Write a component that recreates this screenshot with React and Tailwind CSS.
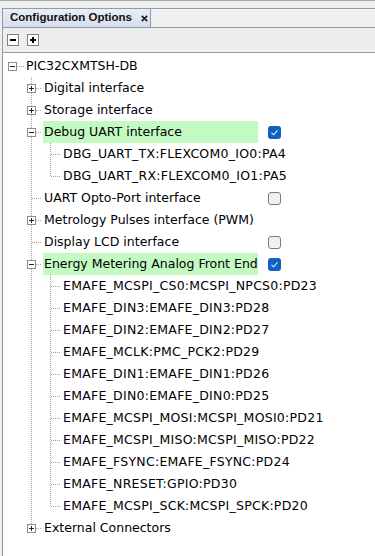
import React from "react";

const DOT = "#a3a3a3";
const BOX = "#8e8e8e";

function Expander({ cx, sign }) {
  const x = cx - 4;
  return (
    <g shapeRendering="crispEdges">
      <rect x={x + 0.5} y={7.5} width={8} height={8} fill="#fff" stroke={BOX} />
      <line x1={x + 2} x2={x + 7} y1={11.5} y2={11.5} stroke="#222" />
      {sign === "+" && <line x1={cx + 0.5} x2={cx + 0.5} y1={9} y2={14} stroke="#222" />}
    </g>
  );
}

function VLine({ x, y1, y2 }) {
  return (
    <line
      x1={x + 0.5}
      x2={x + 0.5}
      y1={y1}
      y2={y2}
      stroke={DOT}
      strokeDasharray="1 1"
      shapeRendering="crispEdges"
    />
  );
}

function HLine({ x1, x2, y = 11 }) {
  return (
    <line
      x1={x1}
      x2={x2}
      y1={y + 0.5}
      y2={y + 0.5}
      stroke={DOT}
      strokeDasharray="1 1"
      shapeRendering="crispEdges"
    />
  );
}

function Gutter({ row }) {
  const widths = { 0: 22, 1: 40, 2: 59 };
  const w = widths[row.lvl];
  return (
    <svg width={w} height={22} className="shrink-0 block">
      <g transform="translate(-3,0)">
        {row.lvl === 0 && (
          <>
            <HLine x1={17} x2={24} />
            <VLine x={31} y1={18} y2={22} />
            <Expander cx={12} sign="-" />
          </>
        )}
        {row.lvl === 1 && (
          <>
            <VLine x={31} y1={0} y2={row.last ? 12 : 22} />
            <HLine x1={32} x2={42} />
            {row.exp && <Expander cx={31} sign={row.exp} />}
          </>
        )}
        {row.lvl === 2 && (
          <>
            <VLine x={31} y1={0} y2={22} />
            <VLine x={50} y1={0} y2={row.last ? 12 : 22} />
            <HLine x1={51} x2={61} />
          </>
        )}
      </g>
    </svg>
  );
}

function CheckBox({ checked }) {
  if (checked) {
    return (
      <div className="w-[13px] h-[13px] rounded-[3px] bg-[#1062c2] flex items-center justify-center shrink-0">
        <svg width="9" height="9" viewBox="0 0 9 9">
          <path d="M1.5 4.8 L3.6 6.8 L7.5 2.3" fill="none" stroke="#e8f0fb" strokeWidth="1.1" />
        </svg>
      </div>
    );
  }
  return (
    <div className="w-[13px] h-[13px] rounded-[3px] bg-[#f1f1f1] border border-[#7b7b7b] shrink-0" />
  );
}

const rows = [
  { lvl: 0, text: "PIC32CXMTSH-DB", exp: "-" },
  { lvl: 1, text: "Digital interface", exp: "+" },
  { lvl: 1, text: "Storage interface", exp: "+" },
  { lvl: 1, text: "Debug UART interface", exp: "-", hl: true, cb: true },
  { lvl: 2, text: "DBG_UART_TX:FLEXCOM0_IO0:PA4" },
  { lvl: 2, text: "DBG_UART_RX:FLEXCOM0_IO1:PA5", last: true },
  { lvl: 1, text: "UART Opto-Port interface", cb: false },
  { lvl: 1, text: "Metrology Pulses interface (PWM)", exp: "+" },
  { lvl: 1, text: "Display LCD interface", cb: false },
  { lvl: 1, text: "Energy Metering Analog Front End", exp: "-", hl: true, cb: true },
  { lvl: 2, text: "EMAFE_MCSPI_CS0:MCSPI_NPCS0:PD23" },
  { lvl: 2, text: "EMAFE_DIN3:EMAFE_DIN3:PD28" },
  { lvl: 2, text: "EMAFE_DIN2:EMAFE_DIN2:PD27" },
  { lvl: 2, text: "EMAFE_MCLK:PMC_PCK2:PD29" },
  { lvl: 2, text: "EMAFE_DIN1:EMAFE_DIN1:PD26" },
  { lvl: 2, text: "EMAFE_DIN0:EMAFE_DIN0:PD25" },
  { lvl: 2, text: "EMAFE_MCSPI_MOSI:MCSPI_MOSI0:PD21" },
  { lvl: 2, text: "EMAFE_MCSPI_MISO:MCSPI_MISO:PD22" },
  { lvl: 2, text: "EMAFE_FSYNC:EMAFE_FSYNC:PD24" },
  { lvl: 2, text: "EMAFE_NRESET:GPIO:PD30" },
  { lvl: 2, text: "EMAFE_MCSPI_SCK:MCSPI_SPCK:PD20", last: true },
  { lvl: 1, text: "External Connectors", exp: "+", last: true },
];

function Row({ row }) {
  const hasCb = row.cb !== undefined;
  return (
    <div className="h-[22px] flex items-center">
      <Gutter row={row} />
      {hasCb || row.hl ? (
        <>
          <div
            className={
              "w-[215px] h-full flex items-center pl-px pt-px whitespace-nowrap " +
              (row.hl ? "bg-[#c2fac2]" : "")
            }
          >
            {row.text}
          </div>
          <div className="ml-[10px]">
            <CheckBox checked={row.cb} />
          </div>
        </>
      ) : (
        <div
          className={
            "pl-px pt-px whitespace-nowrap " + (row.lvl === 2 ? "tracking-[0.25px]" : "")
          }
        >
          {row.text}
        </div>
      )}
    </div>
  );
}

export default function App() {
  return (
    <div
      className="w-[375px] h-[556px] bg-[#eeeeee] flex flex-col overflow-hidden text-black"
      style={{ fontFamily: '"DejaVu Sans", Verdana, sans-serif' }}
    >
      <div className="h-px bg-[#a8a8a8] shrink-0" />
      <div className="h-[7px] shrink-0" />
      <div className="flex-1 ml-[2px] border-l border-[#8a9db5] flex flex-col min-h-0">
        <div className="h-[20px] border-y border-[#8a9db5] flex bg-[#efefef] shrink-0">
          <div className="w-[148px] h-full bg-linear-to-b from-[#e9eef6] to-[#d5deec] border-r border-[#8a9db5] flex items-center pl-[7px]">
            <span
              className="font-bold text-[11.5px] text-[#111]"
              style={{ fontFamily: '"Liberation Sans", Arial, sans-serif' }}
            >
              Configuration Options
            </span>
            <svg width="7" height="7" viewBox="0 0 7 7" className="ml-[9px] mt-px">
              <path d="M0.8 0.8 L6.2 6.2 M6.2 0.8 L0.8 6.2" stroke="#222" strokeWidth="1.7" />
            </svg>
          </div>
          <div className="flex-1 border-t border-[#f9f9f9]" />
        </div>
        <div className="h-[24px] flex items-center gap-[8px] pl-[4px] shrink-0">
          <div className="w-[12px] h-[12px] border border-[#808080] bg-white flex items-center justify-center">
            <div className="w-[6px] h-[2px] bg-black" />
          </div>
          <div className="w-[12px] h-[12px] border border-[#808080] bg-white flex items-center justify-center relative">
            <div className="w-[6px] h-[2px] bg-black" />
            <div className="absolute w-[2px] h-[6px] bg-black" />
          </div>
        </div>
        <div className="flex-1 border-t border-[#9c9c9c] bg-white pt-[2px] text-[12.5px] leading-none">
          {rows.map((r, i) => (
            <Row key={i} row={r} />
          ))}
        </div>
      </div>
    </div>
  );
}
